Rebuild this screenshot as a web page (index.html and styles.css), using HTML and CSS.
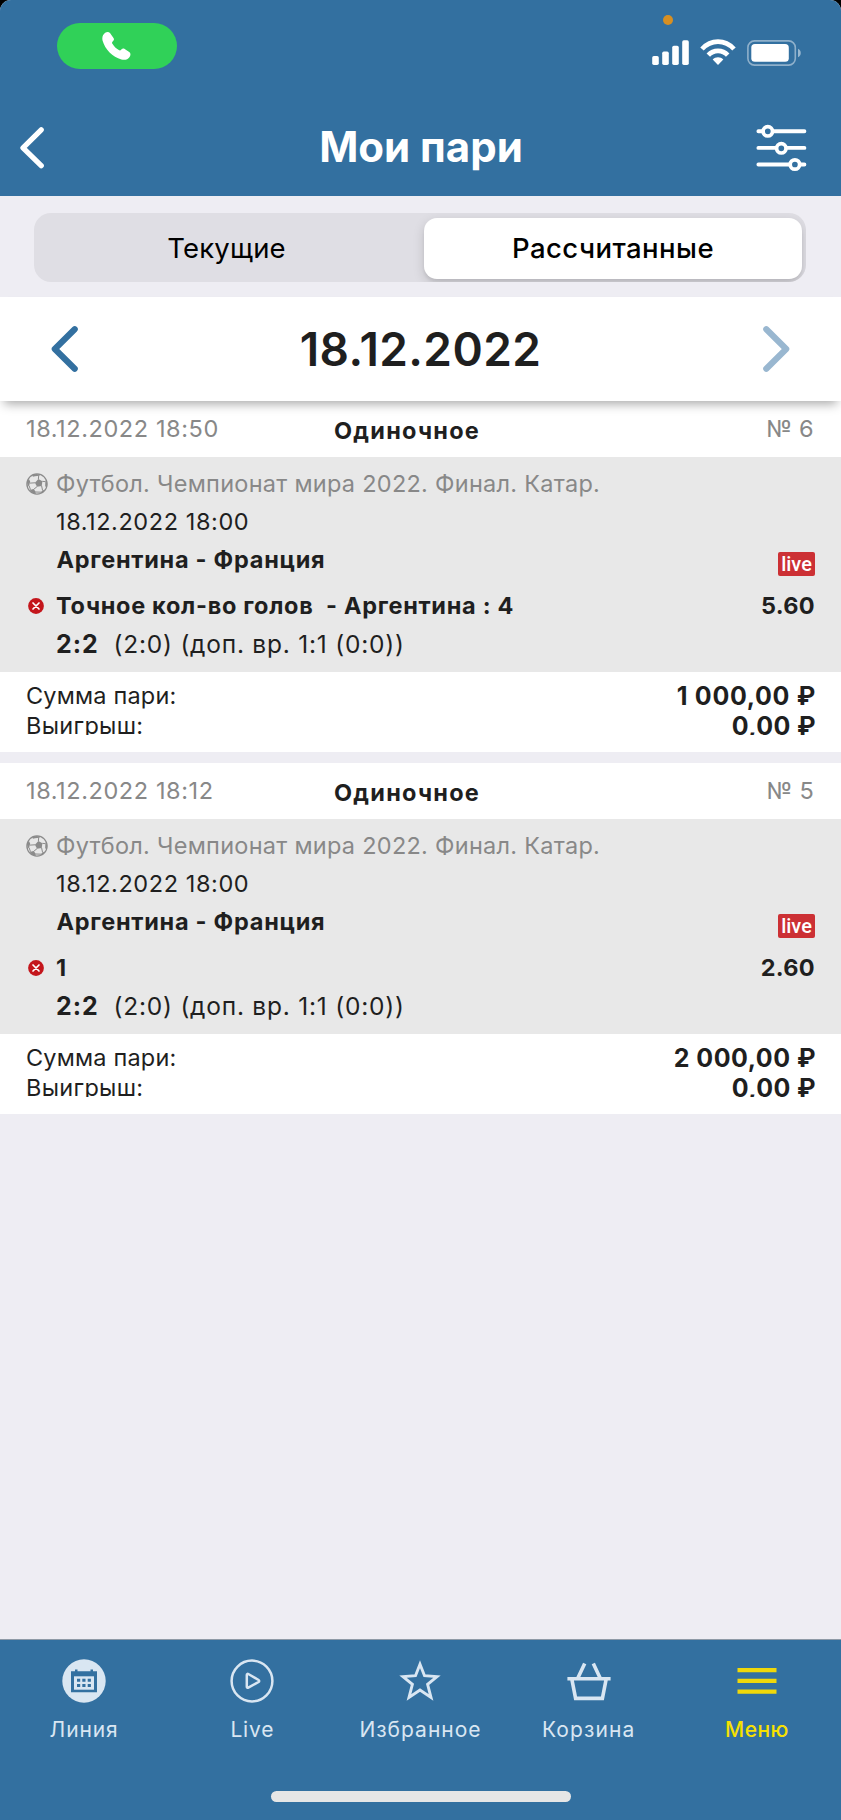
FILE: index.html
```
<!DOCTYPE html>
<html lang="ru">
<head>
<meta charset="utf-8">
<title>Мои пари</title>
<link rel="stylesheet" href="styles.css">
</head>
<body>
<svg class="defs" width="0" height="0">
  <symbol id="ball" viewBox="0 0 22 22">
    <circle cx="11" cy="11" r="10.1" fill="none" stroke="#8b8b8b" stroke-width="1.3"/>
    <path fill="#8b8b8b" d="M12.4 5.9l4 2.4-.7 4.6-4.6.9-2.2-4z"/>
    <path fill="#8b8b8b" d="M6.2 1.9L10.8.9l3.6.9-1.2 1-4.2.5-2.1.4zM1 9.5l1.8-3.7 1.4 2.8-.9 3.4-1.3 1.5zM19.9 6.5l1.2 4.3-.7 3.4-1.2-1 .1-3.4zM3.7 17l3.8-1 2.3 2.8-.3 2.3-3.2-1zM14.5 20.6l1.1-2.3 3-1.8-1.1 2.4z"/>
    <path fill="none" stroke="#8b8b8b" stroke-width="1" d="M12.4 6l.3-3.5M16.3 8.3l3.2.4M15.6 12.8l1 4.8M11 13.6L7.4 16.7M9 9.8l-5 .3M3 12.5l1.5 4.2M9.7 19l5.6.2"/>
  </symbol>
  <symbol id="lost" viewBox="0 0 16 16">
    <circle cx="8" cy="8" r="7.9" fill="#c4161c"/>
    <path d="M5 5l6 6M11 5l-6 6" stroke="#fff" stroke-width="1.7" stroke-linecap="round"/>
  </symbol>
</svg>

<div class="screen">
  <header class="header">
    <div class="status">
      <div class="call">
        <svg width="30" height="30" viewBox="0 0 30 30"><path fill="#fff" d="M3.2 1.8C4.8.6 6.9.6 8 2.1l3.5 4.8c.9 1.3.5 2.4-.6 3.4-1.2 1-1 1.6-.3 2.7 1.5 2.5 3.6 4.5 6.2 6.1 1 .6 1.6.6 2.5-.5 1-1.2 2.1-1.5 3.4-.7l4.5 3.2c1.700 1.200 1.500 3.300.4 4.800-1.800 2.600-4.800 3.400-8.200 2.500C10.600 26.200 3 18.200.6 9.800-.2 6.600.7 3.700 3.200 1.800z"/></svg>
      </div>
      <div class="signals">
        <i class="mic"></i>
        <svg width="38" height="25" viewBox="0 0 38 25" fill="#fff"><rect x=".2" y="16" width="6.6" height="9" rx="1.7"/><rect x="10.2" y="11.5" width="6.6" height="13.5" rx="1.7"/><rect x="20.2" y="5.8" width="6.6" height="19.2" rx="1.7"/><rect x="30.2" y=".2" width="6.6" height="24.8" rx="1.7"/></svg>
        <svg class="wifi" width="36" height="26" viewBox="0 0 36 26"><g fill="none" stroke="#fff" stroke-width="4.7"><path d="M2 10C11 .2 25 .2 34 10"/><path d="M8.300 16.200C13.500 10.500 22.500 10.500 27.700 16.200"/></g><path fill="#fff" d="M12.700 20.600C15.500 17.600 20.500 17.600 23.300 20.600L18 26z"/></svg>
        <svg width="55" height="26" viewBox="0 0 55 26"><rect x=".9" y=".9" width="47.4" height="24.2" rx="6.6" fill="none" stroke="#fff" stroke-opacity=".45" stroke-width="1.6"/><rect x="4.3" y="4.1" width="37.5" height="17.7" rx="3.6" fill="#fff"/><path d="M51 8.800c3.700 1.500 3.700 6.900 0 8.400z" fill="#fff" fill-opacity=".5"/></svg>
      </div>
    </div>
    <div class="titlebar">
      <svg width="24" height="42" viewBox="0 0 24 42"><path d="M21.200 2.900L3 20.800 21.200 38.700" fill="none" stroke="#fff" stroke-width="5.3" stroke-linecap="round" stroke-linejoin="round"/></svg>
      <h1 class="title">Мои пари</h1>
      <svg width="51" height="48" viewBox="0 0 51 48"><g stroke="#fff" stroke-width="3.9" stroke-linecap="round"><path d="M2.400 7.300h46M2.400 23.900h46M2.400 40.500h46"/></g><g fill="#3370a0" stroke="#fff" stroke-width="3.7"><circle cx="11.8" cy="7.3" r="4.7"/><circle cx="25.3" cy="24.3" r="4.7"/><circle cx="38.9" cy="40.5" r="4.7"/></g></svg>
    </div>
  </header>

  <div class="switch">
    <div class="segments">
      <div class="segment segment-current">Текущие</div>
      <div class="segment segment-active">Рассчитанные</div>
    </div>
  </div>

  <div class="datebar">
    <svg width="27" height="46" viewBox="0 0 27 46"><path d="M23.700 3.300L3.800 23 23.700 42.700" fill="none" stroke="#3370a0" stroke-width="6.2" stroke-linecap="round" stroke-linejoin="round"/></svg>
    <div class="date">18.12.2022</div>
    <svg width="27" height="46" viewBox="0 0 27 46"><path d="M3.300 3.300L23.200 23 3.300 42.700" fill="none" stroke="#99b7d0" stroke-width="6.2" stroke-linecap="round" stroke-linejoin="round"/></svg>
  </div>

  <main class="bets">
    <article class="bet">
      <div class="bet-head"><span class="stamp">18.12.2022 18:50</span><b class="kind">Одиночное</b><span class="number">№ 6</span></div>
      <div class="event">
        <div class="row row-league"><svg class="ball" width="22" height="22"><use href="#ball"/></svg><span class="league">Футбол. Чемпионат мира 2022. Финал. Катар.</span></div>
        <div class="row"><span class="when">18.12.2022 18:00</span></div>
        <div class="row"><b class="teams">Аргентина - Франция</b><span class="live">live</span></div>
        <div class="row row-pick"><svg class="lost" width="16" height="16"><use href="#lost"/></svg><b class="pick">Точное кол-во голов&nbsp; - Аргентина : 4</b><b class="odds">5.60</b></div>
        <div class="row"><b class="score">2:2</b><span class="periods">(2:0) (доп. вр. 1:1 (0:0))</span></div>
      </div>
      <div class="sums">
        <div class="sums-clip">
          <div class="sum"><span class="stake">Сумма пари:</span><b class="money">1 000,00 ₽</b></div>
          <div class="sum"><span class="win">Выигрыш:</span><b class="money money-win">0,00 ₽</b></div>
        </div>
      </div>
    </article>

    <article class="bet">
      <div class="bet-head"><span class="stamp">18.12.2022 18:12</span><b class="kind">Одиночное</b><span class="number">№ 5</span></div>
      <div class="event">
        <div class="row row-league"><svg class="ball" width="22" height="22"><use href="#ball"/></svg><span class="league">Футбол. Чемпионат мира 2022. Финал. Катар.</span></div>
        <div class="row"><span class="when">18.12.2022 18:00</span></div>
        <div class="row"><b class="teams">Аргентина - Франция</b><span class="live">live</span></div>
        <div class="row row-pick"><svg class="lost" width="16" height="16"><use href="#lost"/></svg><b class="pick">1</b><b class="odds">2.60</b></div>
        <div class="row"><b class="score">2:2</b><span class="periods">(2:0) (доп. вр. 1:1 (0:0))</span></div>
      </div>
      <div class="sums">
        <div class="sums-clip">
          <div class="sum"><span class="stake">Сумма пари:</span><b class="money money-wide">2 000,00 ₽</b></div>
          <div class="sum"><span class="win">Выигрыш:</span><b class="money money-win">0,00 ₽</b></div>
        </div>
      </div>
    </article>
  </main>

  <footer class="footer">
    <nav class="tabs">
      <div class="tab">
        <svg width="44" height="44" viewBox="0 0 44 44"><circle cx="22" cy="22" r="21.7" fill="#d9e6f2"/><path fill="#3370a0" d="M9 12.300h4V10.500h2.500v1.800h13V10.500H31v1.800h4v21H9z"/><path fill="#d9e6f2" d="M12 17.300h20v13.400H12z"/><path fill="#3370a0" d="M15 19.700h3.200v3H15zM20.300 19.700h3.200v3h-3.200zM25.700 19.700h3.200v3h-3.200zM15 25h3.200v3H15zM20.300 25h3.200v3h-3.200zM25.700 25h3.200v3h-3.200z"/></svg>
        <span class="label label-line">Линия</span>
      </div>
      <div class="tab">
        <svg width="44" height="44" viewBox="0 0 44 44" fill="none" stroke="#d9e6f2" stroke-width="2.5"><circle cx="22" cy="22" r="20.4"/><path stroke-linejoin="round" d="M16.800 15.900c0-.8.8-1.300 1.500-.9l10.300 6c.8.5.8 1.500 0 2l-10.300 5.700c-.7.4-1.500-.1-1.500-.9z"/></svg>
        <span class="label label-live">Live</span>
      </div>
      <div class="tab">
        <svg width="44" height="44" viewBox="0 0 44 44"><path fill="none" stroke="#d9e6f2" stroke-width="2.9" d="M22 5.200L26.500 16.700 39 17.600 29.600 25.400 33 38.400 22 31 11 38.400 14.400 25.400 5 17.600 17.500 16.700z"/></svg>
        <span class="label label-favorites">Избранное</span>
      </div>
      <div class="tab">
        <svg width="44" height="44" viewBox="0 0 44 44"><g fill="none" stroke="#d9e6f2" stroke-width="3.6"><path d="M.4 19.700h43.200M11 18.700L17.700 4.600M33 18.700L26.300 4.600M4.800 20l3.800 19.400h26.800L39.200 20"/></g></svg>
        <span class="label label-basket">Корзина</span>
      </div>
      <div class="tab tab-active">
        <svg width="44" height="44" viewBox="0 0 44 44"><path fill="#f0d80a" d="M2.500 9h39v4.200h-39zM2.500 19.700h39V24h-39zM2.500 30.500h39v4.300h-39z"/></svg>
        <span class="label label-menu">Меню</span>
      </div>
    </nav>
    <div class="home"></div>
  </footer>
</div>
</body>
</html>
```
FILE: styles.css
```
* { box-sizing: border-box; }
body { margin: 0; background: #000; font-family: Inter, Roboto, sans-serif; color: #1f1f1f; }
svg { display: block; flex: none; }
.defs { position: absolute; }
.screen { width: 841px; height: 1820px; display: flex; flex-direction: column; background: #eeedf3; border-radius: 11px 11px 0 0; overflow: hidden; }

.header { height: 196px; flex: none; background: #3370a0; }
.status { height: 98px; padding: 23px 39px 0 57px; display: flex; justify-content: space-between; }
.call { width: 120px; height: 46px; border-radius: 23px; background: #30d158; display: flex; justify-content: center; padding-top: 8px; }
.signals { position: relative; display: flex; gap: 10px; padding-top: 17px; }
.wifi { margin-top: -1px; margin-right: 1px; }
.mic { position: absolute; left: 11px; top: -8px; width: 10px; height: 10px; border-radius: 50%; background: #d78f22; }
.titlebar { height: 98px; padding: 0 34px 0 20px; display: grid; grid-template-columns: 51px 1fr 51px; align-items: center; }
.title { margin: 0 0 2px 15px; font-size: 42px; line-height: 98px; font-weight: 700; text-align: center; color: #fff; }

.switch { height: 101px; flex: none; padding: 17px 35px 15px 34px; }
.segments { height: 69px; border-radius: 17px; background: #dfdee4; display: grid; grid-template-columns: 390px 1fr; overflow: hidden; }
.segment { font-size: 27.5px; line-height: 60px; text-align: center; color: #000; }
.segment-current { line-height: 70px; font-weight: 400; letter-spacing: .2px; padding-right: 5px; }
.segment-active { margin: 5px 4px 4px 0; border-radius: 13px; background: #fff; box-shadow: 0 4px 12px rgba(0,0,0,.15), 0 3px 3px rgba(0,0,0,.06); font-weight: 500; letter-spacing: .46px; }

.datebar { position: relative; z-index: 1; height: 104px; flex: none; padding: 0 51px; display: flex; align-items: center; justify-content: space-between; background: #fff; box-shadow: 0 7px 10px -4px rgba(0,0,0,.34); }
.date { font-size: 46px; font-weight: 600; line-height: 104px; letter-spacing: .4px; }

.bets { flex: 1; display: flex; flex-direction: column; gap: 11px; }
.bet { background: #fff; }
.bet-head { height: 56px; padding: 0 27px 0 26px; display: grid; grid-template-columns: 308px 1fr auto; font-size: 23.5px; line-height: 55px; color: #888; }
.stamp { letter-spacing: .59px; }
.kind { padding-top: 2px; color: #1f1f1f; letter-spacing: 1.25px; }
.number { letter-spacing: .3px; }
.event { height: 215px; padding: 8px 26px 0; background: #e8e8e8; font-size: 23.5px; }
.row { height: 38px; padding-left: 30px; line-height: 38px; display: flex; align-items: center; white-space: pre; }
.row-league, .row-pick { padding-left: 0; }
.ball { margin-right: 8px; }
.league { color: #888; letter-spacing: .27px; }
.when { letter-spacing: .58px; }
.teams { letter-spacing: .74px; margin-left: .5px; }
.live { margin: 8px 0 0 auto; width: 37px; height: 24px; border-radius: 2px; background: #cc3034; color: #fff; font: 500 20px/25px Roboto, sans-serif; text-align: center; }
.row-pick { margin-top: 8px; }
.lost { margin: 0 12px 0 2px; }
.pick { letter-spacing: .7px; }
.odds { margin-left: auto; letter-spacing: .3px; }
.score { font-size: 25px; letter-spacing: .9px; }
.periods { margin-left: 15px; font-size: 24.5px; letter-spacing: .77px; }
.sums { height: 80px; }
.sums-clip { height: 63px; padding: 9px 25px 0 26px; overflow: hidden; }
.sum { height: 29.5px; display: flex; justify-content: space-between; line-height: 29.5px; font-size: 23.5px; }
.stake { letter-spacing: .18px; }
.win { letter-spacing: .3px; }
.money { font-size: 25px; line-height: 31px; letter-spacing: .69px; }
.money-wide { letter-spacing: .5px; }
.money-win { letter-spacing: .4px; }

.footer { height: 181px; flex: none; background: #3370a0; border-top: 1px solid #8f9aa6; }
.tabs { height: 151px; display: grid; grid-template-columns: repeat(5, 1fr); }
.tab { padding-top: 19px; display: flex; flex-direction: column; align-items: center; color: #d9e6f2; }
.tab-active { color: #f7e000; }
.label { margin-top: 12px; font-size: 21px; line-height: 30px; font-weight: 400; }
.label-line { letter-spacing: .9px; }
.label-live { letter-spacing: .8px; }
.label-favorites { letter-spacing: 1px; }
.label-basket { letter-spacing: 1.1px; }
.label-menu { font-weight: 500; letter-spacing: .4px; }
.home { width: 300px; height: 11px; margin: 0 auto; border-radius: 6px; background: #e6e6e6; }
```
